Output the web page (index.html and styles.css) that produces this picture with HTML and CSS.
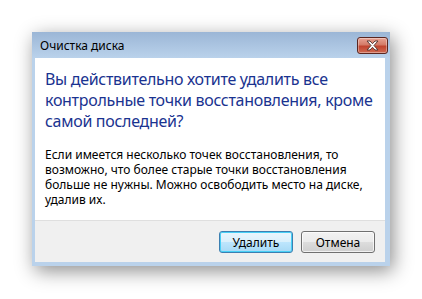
FILE: index.html
```html
<!DOCTYPE html>
<html lang="ru">
<head>
    <meta charset="UTF-8">
    <title>Очистка диска</title>
    <link rel="stylesheet" href="styles.css">
</head>
<body>
    <div class="window">
        <div class="titlebar">
            <span class="title">Очистка диска</span>
            <button class="close" type="button" aria-label="Закрыть">
                <svg width="15" height="11" viewBox="0 0 15 11">
                    <path d="M2 1h3l2.5 2.7L10 1h3l-4 4.5 4 4.5h-3L7.5 7.3 5 10H2l4-4.5z" fill="#fff" stroke="#5a3a36" stroke-width="1" stroke-linejoin="round"/>
                </svg>
            </button>
        </div>
        <div class="client">
            <div class="content">
                <h1>Вы действительно хотите удалить все контрольные точки восстановления, кроме самой последней?</h1>
                <p>Если имеется несколько точек восстановления, то возможно, что более старые точки восстановления больше не нужны. Можно освободить место на диске, удалив их.</p>
            </div>
            <div class="footer">
                <button class="btn default" type="button">Удалить</button>
                <button class="btn" type="button">Отмена</button>
            </div>
        </div>
    </div>
</body>
</html>
```
FILE: styles.css
```css
body {
    margin: 0;
    padding: 32px;
    background: #fff;
    font-family: "Noto Sans", "Open Sans", sans-serif;
    font-size: 12px;
    color: #000;
}
.window {
    width: 358px;
    padding: 0 5px 4px 3px;
    box-sizing: border-box;
    background: linear-gradient(to bottom, #9bb6d6 0, #bad2eb 26px, #bad2eb 100%);
    box-shadow: 3px 5px 18px rgba(0,0,0,0.45);
}
.titlebar {
    height: 26px;
    display: flex;
    align-items: center;
    justify-content: space-between;
    padding-left: 5px;
}
.title {
    font-size: 12px;
    color: #000;
}
.close {
    width: 31px;
    height: 17px;
    margin-top: 1px;
    margin-right: -3px;
    padding: 0;
    border: 1px solid #5b2620;
    border-radius: 3px;
    background: linear-gradient(to bottom, #e8a394 0, #d47b68 45%, #c1442f 55%, #cf6a52 100%);
    box-shadow: inset 0 0 0 1px rgba(255,255,255,0.35);
    display: flex;
    align-items: center;
    justify-content: center;
}
.client {
    background: #fff;
}
.content {
    padding: 11px 4px 13px 10px;
}
h1 {
    margin: 0 0 15px 0;
    font-size: 16px;
    font-weight: normal;
    line-height: 21px;
    letter-spacing: -0.3px;
    color: #1a3390;
}
p {
    margin: 0;
    line-height: 15px;
}
.footer {
    height: 42px;
    box-sizing: border-box;
    padding: 10px 10px 0 0;
    display: flex;
    justify-content: flex-end;
    gap: 8px;
    background: #f0f0f0;
    border-top: 1px solid #dfdfdf;
}
.btn {
    width: 74px;
    height: 22px;
    padding: 0;
    font-family: inherit;
    font-size: 12px;
    color: #000;
    border: 1px solid #707070;
    border-radius: 3px;
    background: linear-gradient(to bottom, #f2f2f2 0, #ebebeb 50%, #dddddd 50%, #cfcfcf 100%);
    box-shadow: inset 0 0 0 1px rgba(255,255,255,0.7);
}
.btn.default {
    border-color: #3c7fb1;
    background: linear-gradient(to bottom, #eaf6fd 0, #d9f0fc 50%, #bee6fd 50%, #a7d9f5 100%);
    box-shadow: inset 0 0 0 1px #48d0f6;
}
```
